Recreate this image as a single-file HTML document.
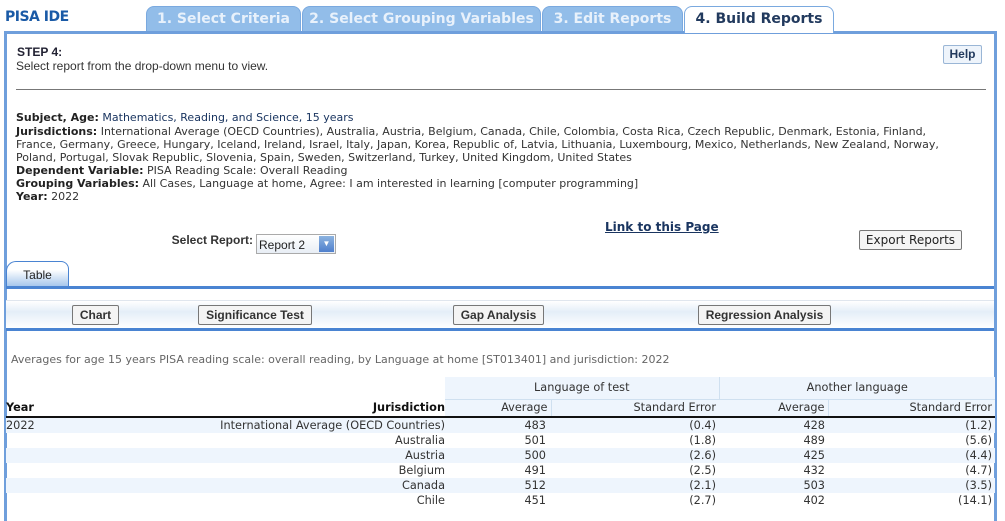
<!DOCTYPE html>
<html><head><meta charset="utf-8"><style>
*{margin:0;padding:0;box-sizing:border-box}
body{width:1005px;height:508px;overflow:hidden;background:#fff;font-family:"DejaVu Sans",Verdana,sans-serif;position:relative;color:#222}
.a{position:absolute;white-space:nowrap}
.tab{position:absolute;top:6px;height:26px;background:#92bde9;border:1px solid #7aa9df;border-bottom:none;border-radius:8px 8px 0 0;color:#e8f1fb;font:bold 14px "DejaVu Sans",Verdana,sans-serif;text-align:center;line-height:24px}
.btn{position:absolute;top:305px;height:20px;border:1px solid #777;border-radius:2px;background:#f4f4f4;font:12px "Liberation Sans",Arial,sans-serif;font-weight:bold;color:#333;text-align:center;line-height:18px}
.info{position:absolute;left:16px;font-size:11px;line-height:13px;color:#333;width:935px;white-space:normal}
.info b{color:#222}
table{position:absolute;left:6px;top:377px;border-collapse:collapse;font-size:11.3px;color:#333}
td{height:15px;line-height:15px;padding:0 3px;text-align:right;white-space:nowrap}
</style></head><body>
<div class="a" style="left:5px;top:9px;font:900 14px 'DejaVu Sans',sans-serif;color:#1a5aa6;letter-spacing:-0.5px">PISA IDE</div>
<div class="tab" style="left:146px;width:155px">1. Select Criteria</div>
<div class="tab" style="left:302px;width:239px">2. Select Grouping Variables</div>
<div class="tab" style="left:542px;width:141px">3. Edit Reports</div>
<div class="tab" style="left:684px;width:150px;background:#fff;color:#223a5e;height:27px;z-index:2">4. Build Reports</div>
<div class="a" style="left:4px;top:31px;width:993px;height:490px;border:3px solid #6f9fdc;border-bottom:none"></div>
<div class="a" style="left:17px;top:45px;font:bold 12px 'Liberation Sans',Arial,sans-serif;color:#223">STEP 4:</div>
<div class="a" style="left:16px;top:59px;font:12px 'Liberation Sans',Arial,sans-serif;color:#333">Select report from the drop-down menu to view.</div>
<div class="a" style="left:943px;top:45px;width:39px;height:19px;border:1px solid #9ab6d6;border-radius:2px;background:#eef4fb;font:bold 12px 'Liberation Sans',Arial,sans-serif;color:#223a5e;text-align:center;line-height:17px">Help</div>
<div class="a" style="left:16px;top:89px;width:970px;border-top:1px solid #777"></div>
<div class="info" style="top:111px"><b>Subject, Age:</b> <span style="color:#1a3560">Mathematics, Reading, and Science, 15 years</span></div>
<div class="info" style="top:125px"><b>Jurisdictions:</b> International Average (OECD Countries), Australia, Austria, Belgium, Canada, Chile, Colombia, Costa Rica, Czech Republic, Denmark, Estonia, Finland, France, Germany, Greece, Hungary, Iceland, Ireland, Israel, Italy, Japan, Korea, Republic of, Latvia, Lithuania, Luxembourg, Mexico, Netherlands, New Zealand, Norway, Poland, Portugal, Slovak Republic, Slovenia, Spain, Sweden, Switzerland, Turkey, United Kingdom, United States</div>
<div class="info" style="top:164px"><b>Dependent Variable:</b> PISA Reading Scale: Overall Reading</div>
<div class="info" style="top:177px"><b>Grouping Variables:</b> All Cases, Language at home, Agree: I am interested in learning [computer programming]</div>
<div class="info" style="top:190px"><b>Year:</b> 2022</div>
<div class="a" style="left:165px;top:233px;font:bold 12px 'Liberation Sans',Arial,sans-serif;color:#333;width:88px;text-align:right">Select Report:</div>
<div class="a" style="left:256px;top:234px;width:80px;height:20px;border:1px solid #aaa;background:linear-gradient(#fff,#e8eef5);font:12px 'Liberation Sans',Arial,sans-serif;line-height:20px;padding-left:2px">Report 2<span style="position:absolute;right:1px;top:1px;width:15px;height:16px;background:linear-gradient(#8cb3e0,#4f7fcc);color:#fff;font-size:8px;text-align:center;line-height:16px">▼</span></div>
<div class="a" style="left:605px;top:220px;font:bold 12px 'DejaVu Sans',sans-serif;color:#1a3560;text-decoration:underline">Link to this Page</div>
<div class="a" style="left:859px;top:230px;width:103px;height:20px;border:1px solid #777;border-radius:2px;background:#f4f4f4;font:12px 'DejaVu Sans',sans-serif;color:#222;text-align:center;line-height:18px">Export Reports</div>
<div class="a" style="left:6px;top:261px;width:63px;height:27px;border:1px solid #4a84d2;border-bottom:none;border-radius:10px 8px 0 0;background:linear-gradient(#fff 30%,#9cc0ea);font:12px 'Liberation Sans',Arial,sans-serif;text-align:center;line-height:26px;color:#222">Table</div>
<div class="a" style="left:6px;top:286px;width:988px;height:3px;background:#4a84d2"></div>
<div class="a" style="left:6px;top:300px;width:988px;height:28px;background:linear-gradient(#fff,#e4eef8 40%,#fff);border-top:1px solid #e0e6ee"></div>
<div class="a" style="left:6px;top:328px;width:988px;height:3px;background:#4a84d2"></div>
<div class="btn" style="left:72px;width:47px">Chart</div>
<div class="btn" style="left:198px;width:114px">Significance Test</div>
<div class="btn" style="left:453px;width:91px">Gap Analysis</div>
<div class="btn" style="left:698px;width:133px">Regression Analysis</div>
<div class="a" style="left:11px;top:353px;font-size:11px;color:#666">Averages for age 15 years PISA reading scale: overall reading, by Language at home [ST013401] and jurisdiction: 2022</div>
<table>
<colgroup><col style="width:60px"><col style="width:379px"><col style="width:106px"><col style="width:168px"><col style="width:109px"><col style="width:167px"></colgroup>
<tr style="height:22px"><td></td><td></td><td colspan="2" style="text-align:center;background:#eef5fd;border-right:1px solid #cfe0f0;border-bottom:1px solid #cfe0f0">Language of test</td><td colspan="2" style="text-align:center;background:#eef5fd;border-bottom:1px solid #cfe0f0">Another language</td></tr>
<tr style="border-bottom:2px solid #111;height:18px"><td style="text-align:left;font-weight:bold;color:#111;padding-left:0">Year</td><td style="font-weight:bold;color:#111;padding-right:0">Jurisdiction</td><td style="background:#eef5fd;border-right:1px solid #cfe0f0">Average</td><td style="background:#eef5fd">Standard Error</td><td style="background:#eef5fd;border-right:1px solid #cfe0f0">Average</td><td style="background:#eef5fd">Standard Error</td></tr>
<tr style="background:#eef5fd"><td style="text-align:left;padding-left:0">2022</td><td style="padding-right:0">International Average (OECD Countries)</td><td style="padding-right:5px">483</td><td>(0.4)</td><td>428</td><td>(1.2)</td></tr>
<tr><td></td><td style="padding-right:0">Australia</td><td style="padding-right:5px">501</td><td>(1.8)</td><td>489</td><td>(5.6)</td></tr>
<tr style="background:#eef5fd"><td></td><td style="padding-right:0">Austria</td><td style="padding-right:5px">500</td><td>(2.6)</td><td>425</td><td>(4.4)</td></tr>
<tr><td></td><td style="padding-right:0">Belgium</td><td style="padding-right:5px">491</td><td>(2.5)</td><td>432</td><td>(4.7)</td></tr>
<tr style="background:#eef5fd"><td></td><td style="padding-right:0">Canada</td><td style="padding-right:5px">512</td><td>(2.1)</td><td>503</td><td>(3.5)</td></tr>
<tr><td></td><td style="padding-right:0">Chile</td><td style="padding-right:5px">451</td><td>(2.7)</td><td>402</td><td>(14.1)</td></tr>
</table>
</body></html>
